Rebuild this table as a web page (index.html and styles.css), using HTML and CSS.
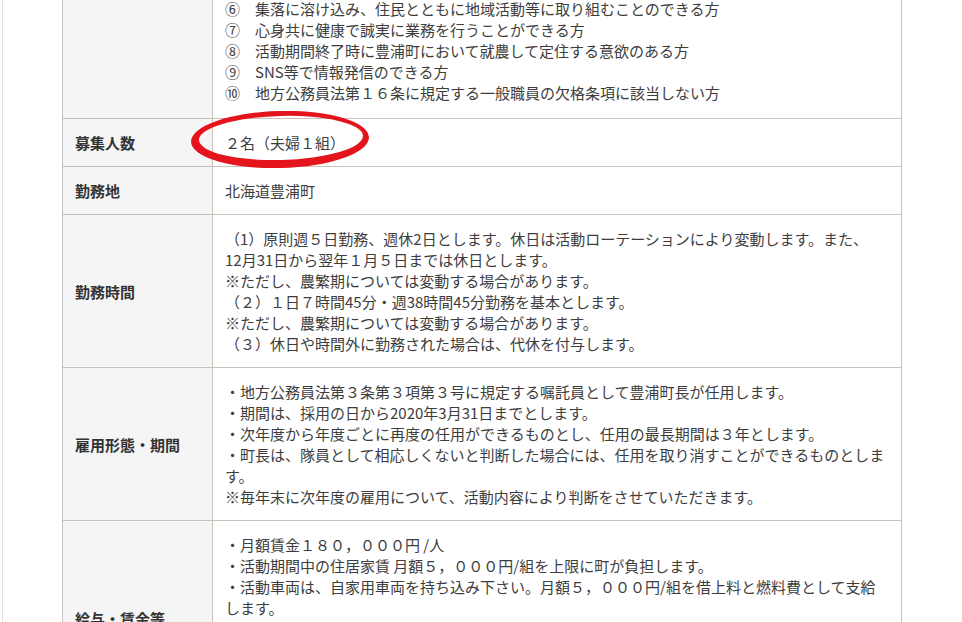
FILE: index.html
```html
<!DOCTYPE html>
<html lang="ja">
<head>
<meta charset="utf-8">
<title>募集要項</title>
<link rel="stylesheet" href="styles.css">
</head>
<body>
<div class="page">
  <table class="info">
    <colgroup>
      <col class="col-label">
      <col class="col-body">
    </colgroup>
    <tbody>
      <tr class="first">
        <th></th>
        <td>⑥　集落に溶け込み、住民とともに地域活動等に取り組むことのできる方<br>⑦　心身共に健康で誠実に業務を行うことができる方<br>⑧　活動期間終了時に豊浦町において就農して定住する意欲のある方<br>⑨　SNS等で情報発信のできる方<br>⑩　地方公務員法第１６条に規定する一般職員の欠格条項に該当しない方</td>
      </tr>
      <tr>
        <th>募集人数</th>
        <td class="count">２名（夫婦１組）<svg class="circle" viewBox="0 0 178 57" width="178" height="57" aria-hidden="true"><path fill="#e3141c" fill-rule="evenodd" d="M0 28.5 A89 28.5 0 1 0 178 28.5 A89 28.5 0 1 0 0 28.5 Z M8 27 A82 22 0 1 0 172 27 A82 22 0 1 0 8 27 Z" transform="rotate(-1.5 89 28.5)"/></svg></td>
      </tr>
      <tr>
        <th>勤務地</th>
        <td>北海道豊浦町</td>
      </tr>
      <tr>
        <th>勤務時間</th>
        <td>（1）原則週５日勤務、週休2日とします。休日は活動ローテーションにより変動します。また、<br>12月31日から翌年１月５日までは休日とします。<br>※ただし、農繁期については変動する場合があります。<br>（２）１日７時間45分・週38時間45分勤務を基本とします。<br>※ただし、農繁期については変動する場合があります。<br>（３）休日や時間外に勤務された場合は、代休を付与します。</td>
      </tr>
      <tr>
        <th>雇用形態・期間</th>
        <td>・地方公務員法第３条第３項第３号に規定する嘱託員として豊浦町長が任用します。<br>・期間は、採用の日から2020年3月31日までとします。<br>・次年度から年度ごとに再度の任用ができるものとし、任用の最長期間は３年とします。<br>・町長は、隊員として相応しくないと判断した場合には、任用を取り消すことができるものとしま<br>す。<br>※毎年末に次年度の雇用について、活動内容により判断をさせていただきます。</td>
      </tr>
      <tr>
        <th>給与・賃金等</th>
        <td>・月額賃金１８０，０００円 /人<br>・活動期間中の住居家賃 月額５，０００円/組を上限に町が負担します。<br>・活動車両は、自家用車両を持ち込み下さい。月額５，０００円/組を借上料と燃料費として支給<br>します。<br>・活動に係る経費（活動旅費など）は、月額２０，０００円/組を上限に支給します。<br>・社会保険、雇用保険に加入します。<br>・期末手当は支給しません。<br>・時間外勤務手当は支給しません。</td>
      </tr>
    </tbody>
  </table>
</div>
</body>
</html>
```
FILE: styles.css
```css
html, body {
  margin: 0;
  padding: 0;
  background: #ffffff;
}

body {
  font-family: "Noto Sans CJK JP", "Noto Sans", sans-serif;
  font-size: 15px;
  line-height: 21px;
  color: #3d3d3d;
}

.page {
  margin-left: 2px;
  border-left: 1px solid #e8e1d7;
  padding-left: 59px;
  min-height: 622px;
}

.info {
  border-collapse: collapse;
  table-layout: fixed;
  width: 840px;
  margin-top: -2px;
}

.col-label {
  width: 150px;
}

.info th,
.info td {
  border: 1px solid #c9c2b9;
  padding: 13px 12px;
  text-align: left;
  vertical-align: middle;
}

.info th {
  background: #f5f5f5;
  font-weight: bold;
  color: #333333;
  white-space: nowrap;
}

.info td {
  background: #ffffff;
}

.info .first th,
.info .first td {
  border-top: none;
  padding-top: 0;
  padding-bottom: 15px;
}

.count {
  position: relative;
}

.circle {
  position: absolute;
  left: -22px;
  top: -8px;
  pointer-events: none;
}
```
